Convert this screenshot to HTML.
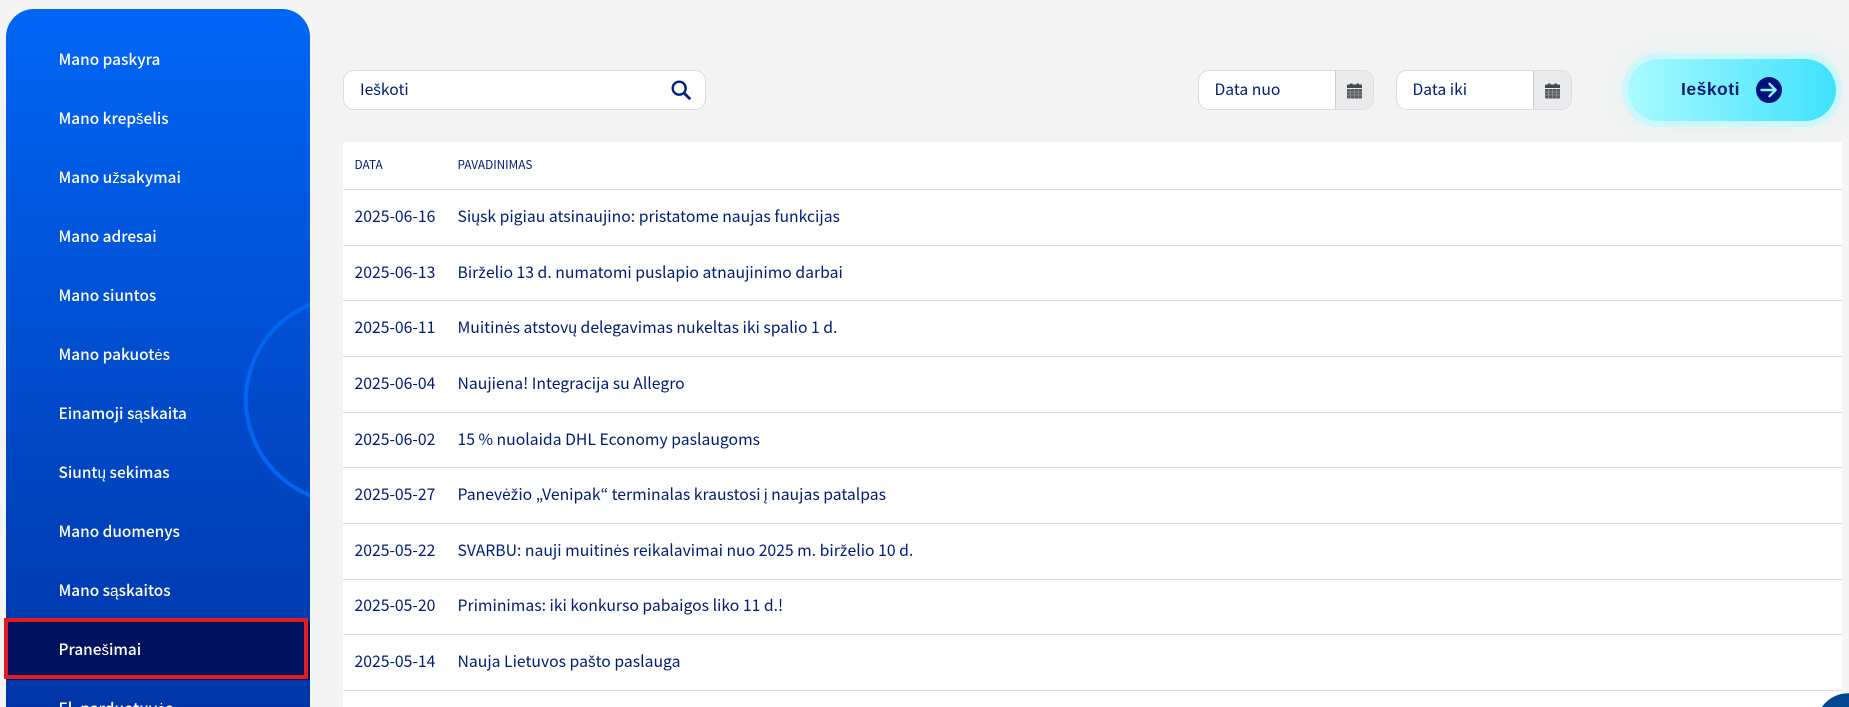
<!DOCTYPE html>
<html lang="lt">
<head>
<meta charset="utf-8">
<title>Pranešimai</title>
<style>
html,body{margin:0;padding:0;width:1849px;height:707px;overflow:hidden;background:#f4f4f4}
body{position:relative;font-family:"Noto Sans CJK JP","Liberation Sans",sans-serif;color:#001a78}
.abs{position:absolute}
i{font-style:normal;font-family:"Liberation Sans",sans-serif;font-size:.97em}
#side{position:absolute;left:6px;top:9px;width:304px;height:698px;border-radius:28px 28px 0 0;background:linear-gradient(180deg,#0066f6 0%,#0035a7 100%);overflow:hidden}
#ring{position:absolute;left:238px;top:286px;width:210px;height:210px;box-sizing:border-box;border:4px solid #0066f2;border-radius:50%}
.mi{position:absolute;left:58.5px;width:240px;height:24px;line-height:24px;font-size:15.4px;font-weight:500;color:#fff;white-space:nowrap;overflow:hidden}
#active{position:absolute;left:6px;top:621px;width:304px;height:59px;background:#01125e}
#redbox{position:absolute;left:4px;top:618px;width:304px;height:61px;box-sizing:border-box;border:4px solid #e31b23}
.input{position:absolute;box-sizing:border-box;background:#fff;border:1px solid #dcdcdc;border-radius:11px;height:40px;top:70px;overflow:hidden}
.input span{position:absolute;top:6.5px;line-height:22px;font-size:15.7px;color:#001a78;white-space:nowrap}
.addon{position:absolute;right:0;top:0;bottom:0;width:37px;background:#e9eaeb;border-left:1px solid #cccccc}
.addon svg{position:absolute;left:11px;top:11px}
#btn{position:absolute;left:1628px;top:59px;width:208px;height:62px;border-radius:31px;background:linear-gradient(90deg,#a9fbff 0%,#3fe1ff 100%);box-shadow:0 0 0 6px #ccf7fb,0 0 22px 10px rgba(190,240,240,.25)}
#btn b{position:absolute;left:53px;top:18px;line-height:24px;font-family:"Liberation Sans",sans-serif;font-size:17.5px;font-weight:700;color:#0a1a78;letter-spacing:.5px}
#btn svg{position:absolute;left:128px;top:18px}
#table{position:absolute;left:343px;top:142px;width:1499px;height:565px;background:#fff}
.hl{position:absolute;left:0;width:1499px;height:1px;background:#dcdcdc}
.th{position:absolute;top:14px;line-height:18px;font-size:11.8px;color:#001a78;white-space:nowrap}
.d,.t{position:absolute;line-height:24px;font-size:15.75px;color:#001a78;white-space:nowrap;margin-top:-1px}
.d{left:11.5px}.t{left:114.5px}
#chat{position:absolute;left:1816px;top:693px;width:33px;height:14px;background:radial-gradient(circle 32px at 32px 32px,#01468f 98%,rgba(1,70,143,0) 100%)}
</style>
</head>
<body>
<div id="side"><div id="ring"></div></div>
<div class="mi" style="top:46.5px">Mano paskyra</div>
<div class="mi" style="top:105.5px">Mano krep<i>š</i>elis</div>
<div class="mi" style="top:164.5px">Mano u<i>ž</i>sakymai</div>
<div class="mi" style="top:223.5px">Mano adresai</div>
<div class="mi" style="top:282.5px">Mano siuntos</div>
<div class="mi" style="top:341.5px">Mano pakuot<i>ė</i>s</div>
<div class="mi" style="top:400.5px">Einamoji sąskaita</div>
<div class="mi" style="top:459.5px">Siuntų sekimas</div>
<div class="mi" style="top:518.5px">Mano duomenys</div>
<div class="mi" style="top:577.5px">Mano sąskaitos</div>
<div id="active"></div>
<div id="redbox"></div>
<div class="mi" style="top:636.5px">Prane<i>š</i>imai</div>
<div class="mi" style="top:695.5px;height:11.5px">El. parduotuv<i>ė</i>s</div>

<div class="input" style="left:343px;width:363px"><span style="left:16px">Ie<i>š</i>koti</span>
<svg class="abs" style="left:327px;top:9px" width="20" height="20" viewBox="0 0 20 20"><circle cx="8.2" cy="8.2" r="6.5" fill="none" stroke="#00207f" stroke-width="2.4"/><path d="M13 13l5.4 5.4" stroke="#00207f" stroke-width="2.8" stroke-linecap="round"/></svg></div>

<div class="input" style="left:1198px;width:176px"><span style="left:15.5px">Data nuo</span><div class="addon"><svg width="15" height="17" viewBox="0 0 15 17"><path d="M3 1.5h2.5v2.5H3z M9.5 1.5H12v2.5H9.5z" fill="#45494f"/><path d="M0 3.5a1 1 0 011-1h13a1 1 0 011 1V6H0z" fill="#45494f"/><path d="M0 7h15v8.5a1 1 0 01-1 1H1a1 1 0 01-1-1z" fill="#585c62"/><path d="M0 10h15M0 13h15M3.7 7v9.5M7.5 7v9.5M11.3 7v9.5" stroke="#989ca1" stroke-width=".7"/></svg></div></div>
<div class="input" style="left:1396px;width:176px"><span style="left:15.5px">Data iki</span><div class="addon"><svg width="15" height="17" viewBox="0 0 15 17"><path d="M3 1.5h2.5v2.5H3z M9.5 1.5H12v2.5H9.5z" fill="#45494f"/><path d="M0 3.5a1 1 0 011-1h13a1 1 0 011 1V6H0z" fill="#45494f"/><path d="M0 7h15v8.5a1 1 0 01-1 1H1a1 1 0 01-1-1z" fill="#585c62"/><path d="M0 10h15M0 13h15M3.7 7v9.5M7.5 7v9.5M11.3 7v9.5" stroke="#989ca1" stroke-width=".7"/></svg></div></div>

<div id="btn"><b>Ieškoti</b>
<svg width="26" height="26" viewBox="0 0 26 26"><circle cx="13" cy="13" r="13" fill="#03127a"/><path d="M5.5 13h14M13.5 6.8l6.2 6.2-6.2 6.2" fill="none" stroke="#8ff3ff" stroke-width="2.4" stroke-linecap="round" stroke-linejoin="round"/></svg></div>

<div id="table">
<div class="th" style="left:11.5px">DATA</div><div class="th" style="left:114.5px">PAVADINIMAS</div>
<div class="hl" style="top:47px"></div>
<div class="d" style="top:63px">2025-06-16</div><div class="t" style="top:63px">Siųsk pigiau atsinaujino: pristatome naujas funkcijas</div>
<div class="hl" style="top:103px"></div>
<div class="d" style="top:119px">2025-06-13</div><div class="t" style="top:119px">Bir<i>ž</i>elio 13 d. numatomi puslapio atnaujinimo darbai</div>
<div class="hl" style="top:158px"></div>
<div class="d" style="top:174px">2025-06-11</div><div class="t" style="top:174px">Muitin<i>ė</i>s atstovų delegavimas nukeltas iki spalio 1 d.</div>
<div class="hl" style="top:214px"></div>
<div class="d" style="top:230px">2025-06-04</div><div class="t" style="top:230px">Naujiena! Integracija su Allegro</div>
<div class="hl" style="top:270px"></div>
<div class="d" style="top:286px">2025-06-02</div><div class="t" style="top:286px">15 % nuolaida DHL Economy paslaugoms</div>
<div class="hl" style="top:325px"></div>
<div class="d" style="top:341px">2025-05-27</div><div class="t" style="top:341px">Panev<i>ė</i><i>ž</i>io „Venipak“ terminalas kraustosi į naujas patalpas</div>
<div class="hl" style="top:381px"></div>
<div class="d" style="top:397px">2025-05-22</div><div class="t" style="top:397px">SVARBU: nauji muitin<i>ė</i>s reikalavimai nuo 2025 m. bir<i>ž</i>elio 10 d.</div>
<div class="hl" style="top:437px"></div>
<div class="d" style="top:452px">2025-05-20</div><div class="t" style="top:452px">Priminimas: iki konkurso pabaigos liko 11 d.!</div>
<div class="hl" style="top:492px"></div>
<div class="d" style="top:508px">2025-05-14</div><div class="t" style="top:508px">Nauja Lietuvos pa<i>š</i>to paslauga</div>
<div class="hl" style="top:548px"></div>
</div>
<div id="chat"></div>
</body>
</html>
